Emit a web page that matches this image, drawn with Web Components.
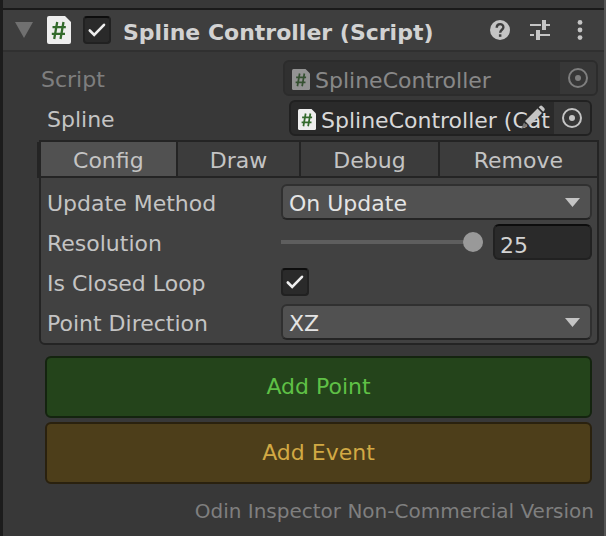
<!DOCTYPE html>
<html lang="en">
<head>
<meta charset="utf-8">
<title>Spline Controller</title>
<style>
  html { height: 100%; background: #383838; }
  body { margin: 0; min-height: 100%; display: flex; font: 22px/36px "DejaVu Sans", Verdana, sans-serif; color: #c4c4c4; }
  inspector-panel { flex: 1; }
</style>
</head>
<body>
<inspector-panel>
  <component-header slot="header">Spline Controller (Script)</component-header>
  <object-field label="Script" value="SplineController" disabled></object-field>
  <object-field label="Spline" value="SplineController (Cat" editable></object-field>
  <tab-group tabs="Config,Draw,Debug,Remove">
    <drop-down label="Update Method" options="On Update,On Fixed Update,Manual"></drop-down>
    <slider-field label="Resolution" value="25"></slider-field>
    <toggle-field label="Is Closed Loop"></toggle-field>
    <drop-down label="Point Direction" options="XZ,XY,YZ"></drop-down>
  </tab-group>
  <action-button class="add-point">Add Point</action-button>
  <action-button class="add-event" tone="amber">Add Event</action-button>
  <span slot="footer">Odin Inspector Non-Commercial Version</span>
</inspector-panel>

<script>
const BASE = `
  *, *::before, *::after { box-sizing: border-box; }
  :host { display: block; }
  button, input, select { font: inherit; color: inherit; margin: 0; padding: 0; border: 0; background: none; border-radius: 0; }
  svg { display: block; flex: none; }
  .row { display: grid; grid-template-columns: 234px minmax(0, 1fr); align-items: center; min-height: 36px; }
  label, .label { white-space: nowrap; line-height: 32px; padding-top: 4px; }
`;
const CHECK = `
  .check { appearance: none; width: 28px; height: 28px; flex: none; display: grid; place-items: center;
    background: #2a2a2a; border: 2px solid #212121; border-top-color: #0d0d0d; border-radius: 4px; }
  .check-box { display: grid; width: 28px; height: 28px; flex: none; }
  .check-box > * { grid-area: 1 / 1; }
  .check-box svg { pointer-events: none; visibility: hidden; }
  .check:checked + svg { visibility: visible; }
`;
const checkBox = (attrs) => `<span class="check-box"><input class="check" type="checkbox" checked ${attrs}>
  <svg width="28" height="28" viewBox="0 0 28 28" fill="none" stroke="#eee" stroke-width="2.600"><path d="M6.800 14.500 11.200 19 21 8.800" stroke-linecap="round"/></svg></span>`;
const scriptIcon = (w, h) => `<svg width="${w}" height="${h}" viewBox="0 0 24 28" preserveAspectRatio="none" aria-hidden="true">
  <path fill="#eee" d="M2 0H18L24 6V26a2 2 0 0 1-2 2H2a2 2 0 0 1-2-2V2a2 2 0 0 1 2-2Z"/>
  <path fill="none" stroke="#336a2c" stroke-width="2.300" d="M10.200 6 7.200 23M16.500 6l-3 17M5.500 11.200H18.800M4.800 17.800H18"/></svg>`;

function define(name, render, setup) {
  customElements.define(name, class extends HTMLElement {
    constructor() { super(); this.attachShadow({ mode: 'open' }); }
    connectedCallback() {
      const t = document.createElement('template');
      t.innerHTML = render(this);
      this.shadowRoot.replaceChildren(t.content.cloneNode(true));
      if (setup) setup(this.shadowRoot, this);
    }
  });
}

define('inspector-panel', () => `<style>${BASE}
  :host { background: #383838; border-left: 3px solid #1c1c1c; border-right: 2px solid #555; padding-top: 8px; }
  main { padding: 8px 5px 0 36px; display: flex; flex-direction: column; gap: 4px; }
  footer { padding: 9px 10px 0 36px; text-align: right; font-size: 20px; line-height: 36px; color: #7f7f7f; white-space: nowrap; }
  ::slotted(.add-point) { margin-top: 7px; }
</style>
<slot name="header"></slot><main><slot></slot></main><footer><slot name="footer"></slot></footer>`);

define('component-header', () => `<style>${BASE}${CHECK}
  :host { border-top: 2px solid #1a1a1a; border-bottom: 2px solid #303030; background: #3e3e3e; }
  header { display: flex; align-items: center; min-height: 40px; padding: 0 14px 0 12px; }
  h1 { margin: 0 0 0 12px; flex: 1; font-size: 22px; line-height: 34px; padding-top: 6px; color: #d2d2d2; white-space: nowrap; }
  .check-box { margin-left: 12px; }
  .fold { margin-right: 14px; }
  .tools { display: flex; gap: 20px; }
</style>
<header>
  <button class="fold" aria-label="Collapse"><svg width="18" height="16" viewBox="0 0 18 16"><path fill="#707070" d="M0 0H18L9 16Z"/></svg></button>
  ${scriptIcon(24, 28)}${checkBox('aria-label="Enabled"')}
  <h1><slot></slot></h1>
  <div class="tools">
    <button aria-label="Help"><svg width="20" height="20" viewBox="0 0 20 20"><circle cx="10" cy="10" r="10" fill="#c4c4c4"/><path d="M6.700 7.800C6.700 2.800 13.400 3.200 13.400 7.200 13.400 9.700 10.200 9.800 10.200 12.700" fill="none" stroke="#3e3e3e" stroke-width="2.400"/><rect x="8.900" y="14.300" width="2.500" height="2.500" fill="#3e3e3e"/></svg></button>
    <button aria-label="Presets"><svg width="20" height="20" viewBox="0 0 20 20" fill="#c4c4c4"><path d="M0 4H11V6H0ZM12 0H16V4H20V6H16V10H12ZM0 14H4V16H0ZM6 10H10V14H20V16H10V20H6Z"/></svg></button>
    <button aria-label="More"><svg width="20" height="20" viewBox="0 0 20 20" fill="#c4c4c4"><circle cx="10" cy="2.400" r="2.400"/><circle cx="10" cy="10" r="2.400"/><circle cx="10" cy="17.600" r="2.400"/></svg></button>
  </div>
</header>`);

define('object-field', el => `<style>${BASE}
  :host { padding: 0 7px 0 8px; }
  :host([disabled]) { padding: 0 1px 0 2px; opacity: .5; }
  .row { grid-template-columns: 242px minmax(0, 1fr); }
  .field { position: relative; display: flex; align-items: stretch; height: 36px; background: #2a2a2a; border: 2px solid #212121; border-radius: 6px; overflow: hidden; }
  .value { flex: 1; min-width: 0; display: flex; align-items: center; gap: 5px; padding: 2px 0 0 7px; color: #d8d8d8; overflow: hidden; }
  .value span { white-space: nowrap; line-height: 26px; padding-top: 4px; }
  .pick { width: 36px; flex: none; display: grid; place-items: center; background: #373737; }
  .edit { position: absolute; right: 44px; top: 2px; }
</style>
<div class="row"><span class="label" id="l">${el.getAttribute('label')}</span>
  <div class="field" role="group" aria-labelledby="l">
    <div class="value">${scriptIcon(18, 21)}<span>${el.getAttribute('value')}</span></div>
    ${el.hasAttribute('editable') ? `<button class="edit" aria-label="Edit"><svg width="26" height="26" viewBox="0 0 26 26" fill="#c4c4c4"><path d="M5 17 17.500 4.500l4.500 4.500L9.500 21.500ZM18.700 3.300 20 2q1.200-1 2.400.2l1.800 1.800q1.200 1.200.2 2.400L23.200 7.800Z"/><path fill="#777" d="M4 18.500 7.500 22 1 25Z"/></svg></button>` : ''}
    <button class="pick" aria-label="Select object" ${el.hasAttribute('disabled') ? 'disabled' : ''}><svg width="20" height="20" viewBox="0 0 20 20"><circle cx="10" cy="10" r="9" fill="none" stroke="#c4c4c4" stroke-width="2"/><circle cx="10" cy="10" r="3" fill="#c4c4c4"/></svg></button>
  </div></div>`);

define('tab-group', el => `<style>${BASE}
  :host { border: 2px solid #242424; border-radius: 0 0 6px 6px; background: #414141; }
  nav { display: flex; background: #3c3c3c; border-bottom: 2px solid #242424; box-shadow: -4px 0 #242424; }
  button { flex: 1 1 auto; height: 34px; line-height: 30px; padding-top: 4px; }
  button + button { border-left: 2px solid #242424; }
  button:last-child { padding-left: 2px; padding-right: 2px; }
  button[aria-selected=true] { background: #515151; }
  section { display: flex; flex-direction: column; gap: 4px; padding: 6px 5px 3px 6px; }
</style>
<nav role="tablist">${el.getAttribute('tabs').split(',').map((t, i) => `<button role="tab" aria-selected="${i === 0}">${t}</button>`).join('')}</nav>
<section role="tabpanel"><slot></slot></section>`, root => {
  const tabs = root.querySelectorAll('button');
  tabs.forEach(b => b.addEventListener('click', () => tabs.forEach(o => o.setAttribute('aria-selected', o === b))));
});

define('drop-down', el => `<style>${BASE}
  .wrap { display: grid; align-items: center; }
  .wrap > * { grid-area: 1 / 1; }
  select { appearance: none; width: 100%; height: 36px; line-height: 28px; padding: 3px 36px 0 6px; background: #515151; color: #e4e4e4; border: 2px solid #303030; border-bottom-color: #242424; border-radius: 6px; }
  svg { justify-self: end; margin-right: 12px; pointer-events: none; }
</style>
<div class="row"><label for="s">${el.getAttribute('label')}</label>
  <div class="wrap"><select id="s">${el.getAttribute('options').split(',').map(o => `<option>${o}</option>`).join('')}</select>
  <svg width="15" height="9" viewBox="0 0 15 9"><path fill="#c4c4c4" d="M0 0H15L7.500 9Z"/></svg></div></div>`);

define('slider-field', el => `<style>${BASE}
  .wrap { display: grid; grid-template-columns: minmax(0, 1fr) 99px; gap: 10px; align-items: center; }
  [type=range] { appearance: none; width: 100%; height: 20px; }
  [type=range]::-webkit-slider-runnable-track { height: 4px; background: #5e5e5e; }
  [type=range]::-webkit-slider-thumb { appearance: none; width: 20px; height: 20px; margin-top: -8px; border-radius: 50%; background: #999; }
  [type=text] { width: 100%; height: 36px; line-height: 26px; padding: 6px 5px 0; background: #2a2a2a; color: #d2d2d2; border: 2px solid #212121; border-top-color: #0d0d0d; border-radius: 6px; }
</style>
<div class="row"><label for="r">${el.getAttribute('label')}</label>
  <div class="wrap"><input id="r" type="range" min="1" max="25" value="${el.getAttribute('value')}">
  <input type="text" aria-label="${el.getAttribute('label')} value" value="${el.getAttribute('value')}"></div></div>`, root => {
  const [range, text] = root.querySelectorAll('input');
  range.addEventListener('input', () => { text.value = range.value; });
  text.addEventListener('change', () => { range.value = text.value; });
});

define('toggle-field', el => `<style>${BASE}${CHECK}</style>
<div class="row"><label for="c">${el.getAttribute('label')}</label>${checkBox('id="c"')}</div>`);

define('action-button', () => `<style>${BASE}
  :host { padding: 0 7px 0 6px; --fill: #24441b; --edge: #14240f; --ink: #5fc046; }
  :host([tone=amber]) { --fill: #4d3e1a; --edge: #2a210e; --ink: #d2a944; }
  button { display: block; width: 100%; height: 62px; background: var(--fill); border: 2px solid var(--edge); border-radius: 6px; color: var(--ink); }
</style>
<button><slot></slot></button>`);
</script>
</body>
</html>
